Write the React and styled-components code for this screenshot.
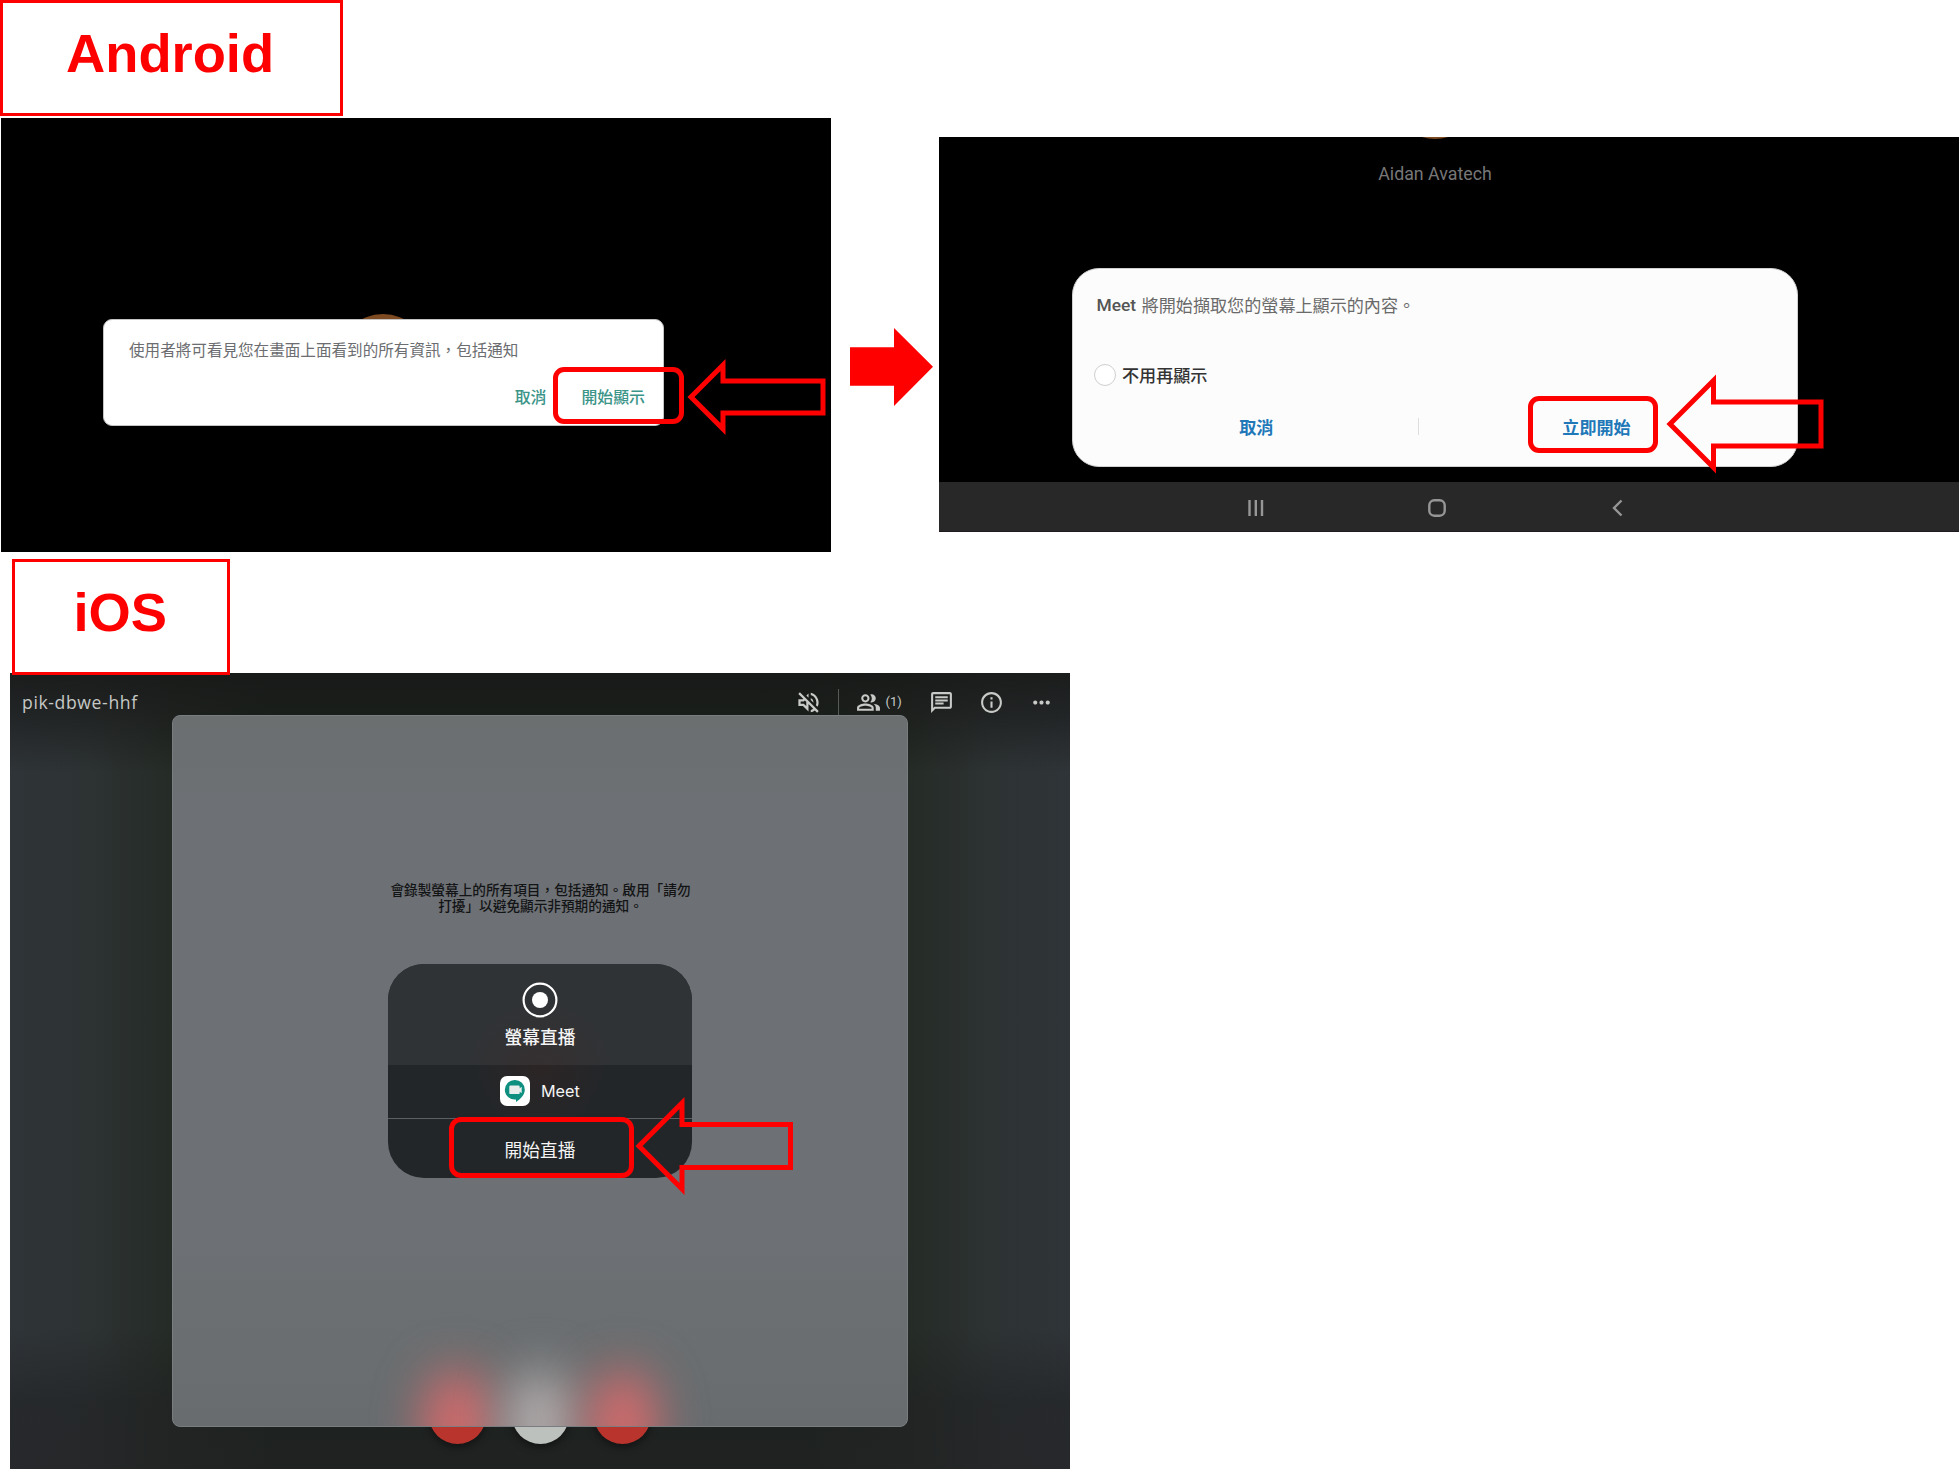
import React from "react";
import styled, { createGlobalStyle } from "styled-components";
import {
  MdOutlineVolumeOff,
  MdOutlinePeopleAlt,
  MdOutlineChat,
  MdInfoOutline,
  MdMoreHoriz,
} from "react-icons/md";

const GlobalStyle = createGlobalStyle`
  * { box-sizing: border-box; }
  body { margin: 0; background: #fff; overflow: hidden; }
`;

const cjk = `"Noto Sans CJK TC", sans-serif`;

const Page = styled.main`
  display: flex;
  flex-direction: column;
  align-items: flex-start;
  width: 1959px;
  height: 1469px;
  overflow: hidden;
  background: #fff;
  font-family: Roboto, ${cjk};
`;

const PlatformLabel = styled.h1`
  position: relative;
  z-index: 1;
  flex: none;
  margin: ${(p) => p.$margin || "0"};
  width: ${(p) => p.$width}px;
  height: 116px;
  padding: 21px 0 0 ${(p) => p.$indent}px;
  border: 3px solid #f00;
  background: #fff;
  color: #f00;
  font: bold 54.3px/60px "Liberation Sans", Arial, sans-serif;
`;

const AndroidRow = styled.section`
  display: flex;
  align-items: flex-start;
  flex: none;
  height: 434px;
  margin: 2px 0 0 1px;
`;

const Highlight = styled.div`
  position: absolute;
  left: ${(p) => p.$x}px;
  top: ${(p) => p.$y}px;
  width: ${(p) => p.$w}px;
  height: ${(p) => p.$h}px;
  border: 5px solid #f00;
  border-radius: ${(p) => p.$r || 11}px;
`;

const PointerSvg = styled.svg`
  position: absolute;
  left: ${(p) => p.$x}px;
  top: ${(p) => p.$y}px;
  overflow: visible;
  fill: none;
  stroke: #f00;
  stroke-width: 5;
  stroke-miterlimit: 10;
`;

/* Hollow arrow whose tip lies at (x, y) and points left. */
function Pointer({ x, y, head, half, length }) {
  return (
    <PointerSvg $x={x} $y={y} width="1" height="1">
      <path
        d={`M0 0L${head} ${-head}V${-half}H${length}V${half}H${head}V${head}Z`}
      />
    </PointerSvg>
  );
}

const NextArrow = styled.svg`
  flex: none;
  display: block;
  margin: 210px 6px 0 19px;
  fill: #f00;
`;

/* First Android screen */
const SharePanel = styled.div`
  position: relative;
  flex: none;
  width: 830px;
  height: 434px;
  padding: 200.5px 0 0 102px;
  background: #000;
  overflow: hidden;
`;

const Avatar = styled.div`
  position: absolute;
  left: ${(p) => p.$x}px;
  top: ${(p) => p.$y}px;
  width: 88px;
  height: 88px;
  border-radius: 50%;
  background: #7d4a22;
`;

const ShareDialog = styled.div`
  position: relative;
  width: 561px;
  height: 107px;
  padding: 18px 18px 0 25px;
  border: 1px solid #c4c4c4;
  border-radius: 9px;
  background: #fff;
`;

const ShareMessage = styled.p`
  margin: 0;
  font: 400 15.58px/22px ${cjk};
  color: #6b6d70;
  white-space: nowrap;
`;

const ShareActions = styled.div`
  display: flex;
  justify-content: flex-end;
  gap: 35px;
  margin-top: 26px;
`;

const ShareButton = styled.span`
  font: 500 15.9px/22px ${cjk};
  color: #3a9488;
`;

/* Second Android screen */
const CapturePanel = styled.div`
  position: relative;
  flex: none;
  display: flex;
  flex-direction: column;
  align-items: flex-start;
  width: 1020px;
  height: 395px;
  margin-top: 19px;
  background: #000;
  overflow: hidden;
`;

const UserName = styled.div`
  width: 992px;
  margin-top: 26px;
  text-align: center;
  font: 400 17.8px/22px Roboto, sans-serif;
  color: #777;
`;

const CaptureDialog = styled.div`
  width: 726px;
  height: 199px;
  margin: 82.5px 0 0 133px;
  padding: 24.5px 22px 0;
  border: 1px solid #d0d0d0;
  border-radius: 27px;
  background: #fcfcfc;
`;

const CaptureMessage = styled.p`
  display: flex;
  gap: 5.5px;
  margin: 0 0 0 1.5px;
  font: 400 17.1px/24px ${cjk};
  color: #6a6a6a;
`;

const AppName = styled.span`
  font: 500 17.4px/24px Roboto, sans-serif;
  color: #555;
`;

const CheckRow = styled.div`
  display: flex;
  align-items: center;
  gap: 6px;
  margin-top: 46px;
  height: 24px;
  font: 500 17.1px/24px ${cjk};
  color: #333;
`;

const Radio = styled.span`
  width: 22px;
  height: 22px;
  margin-left: -1px;
  border: 1.5px solid #cfcfcf;
  border-radius: 50%;
  background: #fff;
`;

const CaptureActions = styled.div`
  display: grid;
  grid-template-columns: 322.5px 1px 356px;
  align-items: center;
  justify-items: center;
  margin-top: 27.5px;
  height: 24px;
`;

const CaptureButton = styled.span`
  font: 700 17.1px/24px ${cjk};
  color: #2178b8;
`;

const Divider = styled.span`
  width: 1px;
  height: ${(p) => p.$h}px;
  background: ${(p) => p.$color};
`;

const NavBar = styled.div`
  display: flex;
  flex: none;
  align-items: center;
  width: 100%;
  height: 50px;
  margin-top: 15.5px;
  padding: 3.5px 0 0 308px;
  gap: 162.2px;
  background: #282828;
  border-bottom: 1px solid #201a20;

  svg {
    display: block;
    fill: none;
    stroke: #969696;
    stroke-width: 2.4;
  }
`;

/* iOS screen */
const IosPanel = styled.section`
  position: relative;
  flex: none;
  width: 1060px;
  height: 796px;
  margin: -2px 0 0 10px;
  overflow: hidden;
  background:
    linear-gradient(
      180deg,
      rgba(22, 23, 22, 0.8) 0,
      rgba(22, 23, 22, 0.55) 40px,
      rgba(22, 23, 22, 0) 100px,
      rgba(22, 23, 22, 0) 655px,
      rgba(28, 28, 30, 0.45) 730px,
      rgba(32, 32, 34, 0.6) 796px
    ),
    linear-gradient(90deg, #2f3438 0, #2d3233 80px, #252b26 162px, #1e2620 260px,
      #1e2620 800px, #252b26 898px, #2d3233 980px, #2f3438 1060px);
`;

const MeetHeader = styled.header`
  display: flex;
  align-items: center;
  height: 42px;
  padding: 16px 16.5px 0 12px;
  color: #c8cac8;
`;

const MeetCode = styled.span`
  margin-right: auto;
  font: 400 17.6px/24px "Open Sans", sans-serif;
  letter-spacing: 0.62px;
  color: #c6c8c6;
`;

const ToolIcon = styled.span`
  display: flex;
  margin-left: ${(p) => p.$gap || 0}px;
  font-size: ${(p) => p.$size || 25}px;
`;

const HeaderDivider = styled(Divider)`
  margin-left: 15.5px;
`;

const Count = styled.span`
  width: 16px;
  margin-left: 5px;
  font: 400 13px/20px Roboto, sans-serif;
`;

const Sheet = styled.div`
  position: relative;
  display: flex;
  flex-direction: column;
  align-items: center;
  width: 736px;
  height: 712px;
  margin-left: 162px;
  padding-top: 164.5px;
  border: 1px solid #7a7d80;
  border-radius: 8px;
  background: linear-gradient(180deg, #6b6f70 0, #6d7074 90px, #6d7074 520px, #6a6e70 640px, #686c6f 100%);
  overflow: hidden;
`;

const Notice = styled.p`
  width: 304px;
  margin: 0 0 0 1px;
  text-align: center;
  font: 500 13.65px/16px ${cjk};
  color: #131416;
  white-space: nowrap;
`;

const BroadcastCard = styled.div`
  position: relative;
  flex: none;
  width: 304px;
  height: 213.5px;
  margin: 51.5px 0 0 0;
  border-radius: 36px;
  background: #232629;
  color: #f4f4f4;
  overflow: hidden;
`;

const CardTop = styled.div`
  display: flex;
  flex-direction: column;
  align-items: center;
  height: 101px;
  padding-top: 18px;
  background: radial-gradient(circle at 50% 110%, #362f2f 0, #303336 75px);
  font: 500 17.7px/26px ${cjk};

  svg {
    display: block;
    margin-bottom: 5px;
  }
`;

const CardApp = styled.div`
  display: flex;
  align-items: center;
  gap: 11px;
  height: 53.5px;
  padding-left: 112px;
  background: radial-gradient(circle at 50% 0, #2c2525 0, #232629 65px);
  border-bottom: 1.5px solid #5d5f61;
  font: 400 16.2px/24px Inter, sans-serif;
`;

const CardAction = styled.div`
  height: 59px;
  padding-top: 17px;
  text-align: center;
  font: 400 17.7px/26px ${cjk};
`;

const CallButton = styled.span`
  position: absolute;
  left: ${(p) => p.$x}px;
  top: ${(p) => p.$y}px;
  width: 57px;
  height: 57px;
  border-radius: 50%;
  background: ${(p) => p.$color};
  box-shadow: 0 3px 8px rgba(0, 0, 0, 0.45);
`;

const Glow = styled.span`
  position: absolute;
  left: ${(p) => p.$x}px;
  bottom: -52px;
  width: 68px;
  height: 108px;
  border-radius: 50%;
  background: ${(p) => p.$color};
  filter: blur(24px);
`;

export default function App() {
  return (
    <Page>
      <GlobalStyle />
      <PlatformLabel $width={343} $indent={63}>Android</PlatformLabel>

      <AndroidRow>
        <SharePanel>
          <Avatar $x={338} $y={196} />
          <ShareDialog>
            <ShareMessage>使用者將可看見您在畫面上面看到的所有資訊，包括通知</ShareMessage>
            <ShareActions>
              <ShareButton>取消</ShareButton>
              <ShareButton>開始顯示</ShareButton>
            </ShareActions>
          </ShareDialog>
          <Highlight $x={552} $y={249} $w={131} $h={57} />
          <Pointer x={689.5} y={278.5} head={32} half={16} length={132} />
        </SharePanel>

        <NextArrow width="83" height="78" viewBox="0 0 83 78">
          <path d="M0 19.2H44V0L83 38.8L44 78V57.8H0Z" />
        </NextArrow>

        <CapturePanel>
          <Avatar $x={452} $y={-86} />
          <UserName>Aidan Avatech</UserName>
          <CaptureDialog>
            <CaptureMessage>
              <AppName>Meet</AppName>
              <span>將開始擷取您的螢幕上顯示的內容。</span>
            </CaptureMessage>
            <CheckRow>
              <Radio />
              不用再顯示
            </CheckRow>
            <CaptureActions>
              <CaptureButton>取消</CaptureButton>
              <Divider $h={17} $color="#dedede" />
              <CaptureButton>立即開始</CaptureButton>
            </CaptureActions>
          </CaptureDialog>
          <NavBar>
            <svg width="18" height="18" viewBox="0 0 18 18">
              <path d="M2.5 1V17M8.8 1V17M15 1V17" />
            </svg>
            <svg width="20" height="20" viewBox="0 0 20 20">
              <rect x="2.3" y="2.3" width="15.4" height="15.4" rx="5" />
            </svg>
            <svg width="18" height="18" viewBox="0 0 18 18">
              <path d="M12.500 1.500L5 9L12.500 16.500" />
            </svg>
          </NavBar>
          <Highlight $x={589} $y={259} $w={130} $h={57} />
          <Pointer x={730.5} y={286.5} head={43.5} half={22} length={151} />
        </CapturePanel>
      </AndroidRow>

      <PlatformLabel $width={218} $indent={58.5} $margin="7px 0 0 12px">iOS</PlatformLabel>

      <IosPanel>
        <MeetHeader>
          <MeetCode>pik-dbwe-hhf</MeetCode>
          <ToolIcon $size={27}><MdOutlineVolumeOff /></ToolIcon>
          <HeaderDivider $h={26} $color="#565a57" />
          <ToolIcon $gap={17}><MdOutlinePeopleAlt /></ToolIcon>
          <Count>(1)</Count>
          <ToolIcon $gap={27}><MdOutlineChat /></ToolIcon>
          <ToolIcon $gap={25}><MdInfoOutline /></ToolIcon>
          <ToolIcon $gap={25}><MdMoreHoriz /></ToolIcon>
        </MeetHeader>

        <CallButton $x={418.5} $y={714} $color="#b8342d" />
        <CallButton $x={501.5} $y={714} $color="#bdc1bd" />
        <CallButton $x={584} $y={714} $color="#b8342d" />

        <Sheet>
          <Glow $x={250} $color="#d86a6b" />
          <Glow $x={333} $color="#b5aeae" />
          <Glow $x={416} $color="#d86a6b" />
          <Notice>
            會錄製螢幕上的所有項目，包括通知。啟用「請勿
            <br />
            打擾」以避免顯示非預期的通知。
          </Notice>
          <BroadcastCard>
            <CardTop>
              <svg width="36" height="36" viewBox="0 0 36 36">
                <circle cx="18" cy="18" r="16.4" fill="none" stroke="#fff" strokeWidth="2.2" />
                <circle cx="18" cy="18" r="8" fill="#fff" />
              </svg>
              螢幕直播
            </CardTop>
            <CardApp>
              <svg width="30" height="30" viewBox="0 0 30 30">
                <rect width="30" height="30" rx="7" fill="#fff" />
                <path
                  d="M15 4a9.800 9.800 0 0 1 9.800 9.800c0 5-4 9-8.800 12.200V23.500A9.800 9.800 0 1 1 15 4Z"
                  fill="#0e8f80"
                />
                <path
                  d="M10.500 9.500h8a1.200 1.200 0 0 1 1.200 1.200v1.600l2-1.500v6.400l-2-1.500v1.200a1.200 1.200 0 0 1-1.200 1.200h-8a1.200 1.200 0 0 1-1.200-1.200v-6.200a1.200 1.200 0 0 1 1.200-1.200Z"
                  fill="#e9eeed"
                />
              </svg>
              Meet
            </CardApp>
            <CardAction>開始直播</CardAction>
          </BroadcastCard>
        </Sheet>
        <Highlight $x={439} $y={444} $w={185} $h={61} $r={12} />
        <Pointer x={629} y={473} head={43} half={21.5} length={151.5} />
      </IosPanel>
    </Page>
  );
}
